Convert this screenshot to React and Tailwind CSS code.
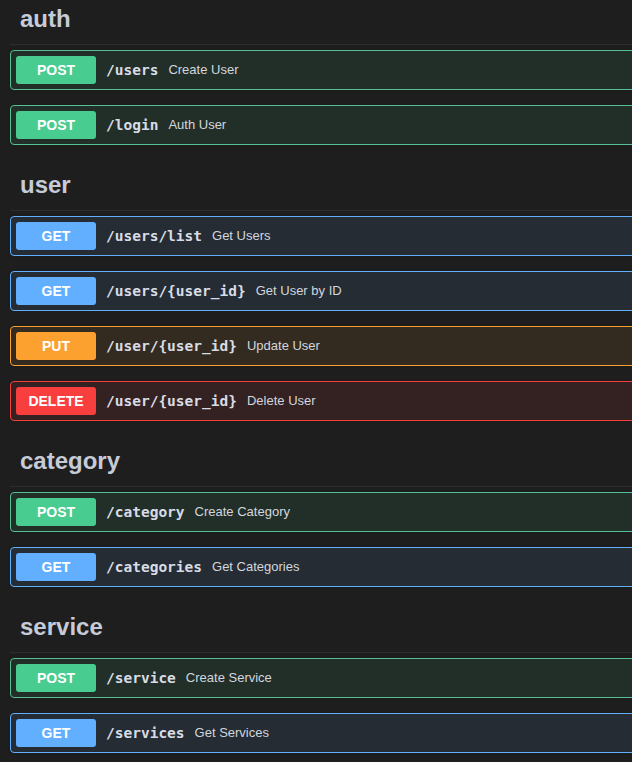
import React from "react";

const styles = {
  POST: { block: "bg-[#222f29] border-[#55c194]", badge: "bg-[#49cc90]" },
  GET: { block: "bg-[#252c34] border-[#61affe]", badge: "bg-[#61affe]" },
  PUT: { block: "bg-[#342b20] border-[#fca130]", badge: "bg-[#fca130]" },
  DELETE: { block: "bg-[#342121] border-[#f93e3e]", badge: "bg-[#f93e3e]" },
};

const tags = [
  {
    name: "auth",
    ops: [
      ["POST", "/users", "Create User"],
      ["POST", "/login", "Auth User"],
    ],
  },
  {
    name: "user",
    ops: [
      ["GET", "/users/list", "Get Users"],
      ["GET", "/users/{user_id}", "Get User by ID"],
      ["PUT", "/user/{user_id}", "Update User"],
      ["DELETE", "/user/{user_id}", "Delete User"],
    ],
  },
  {
    name: "category",
    ops: [
      ["POST", "/category", "Create Category"],
      ["GET", "/categories", "Get Categories"],
    ],
  },
  {
    name: "service",
    ops: [
      ["POST", "/service", "Create Service"],
      ["GET", "/services", "Get Services"],
    ],
  },
];

function Operation({ method, path, summary }) {
  const s = styles[method];
  return (
    <div
      className={`h-[40px] mb-[15px] border rounded-[4px] flex items-center px-[5px] shadow-[0_0_3px_rgba(0,0,0,0.19)] ${s.block}`}
    >
      <span
        className={`w-[80px] h-[28px] rounded-[3px] flex items-center justify-center text-[14px] font-bold text-white font-['Liberation_Sans',Arial,sans-serif] ${s.badge}`}
      >
        {method}
      </span>
      <span className="px-[10px] pt-[1px] text-[14.5px] font-bold text-[#d8dce4] font-['DejaVu_Sans_Mono',monospace]">
        {path}
      </span>
      <span className="text-[13px] text-[#d2d6de] font-['Liberation_Sans',Arial,sans-serif]">
        {summary}
      </span>
    </div>
  );
}

export default function App() {
  return (
    <div className="w-full min-h-[762px] bg-[#1e1e1e] overflow-hidden">
      <div className="w-[720px] pl-[10px] -mt-[6px]">
        {tags.map((tag) => (
          <section key={tag.name}>
            {/* TAG HEADING */}
            <h3 className="h-[51px] mb-[5px] pl-[10px] flex items-center border-b border-[#2b2d31] text-[24px] font-bold text-[#c6cbd8] font-['Liberation_Sans',Arial,sans-serif]">
              {tag.name}
            </h3>

            {tag.ops.map(([method, path, summary]) => (
              <Operation key={method + path} method={method} path={path} summary={summary} />
            ))}
          </section>
        ))}
      </div>
    </div>
  );
}
